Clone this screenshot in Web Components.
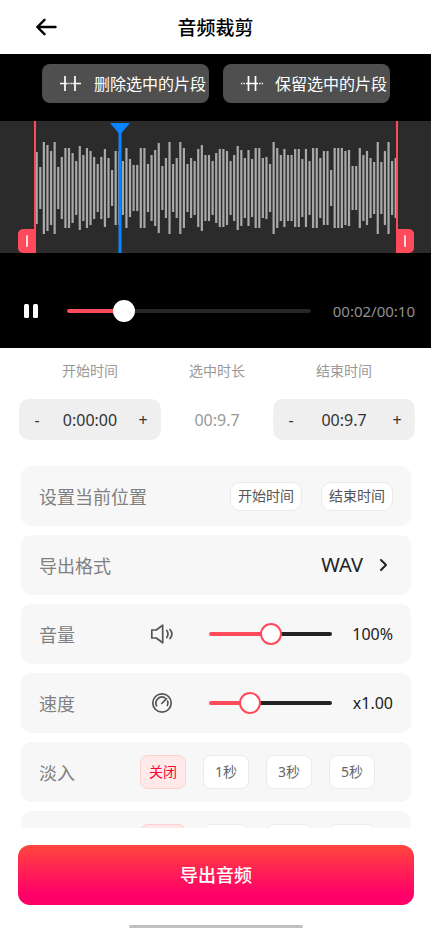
<!DOCTYPE html>
<html lang="zh-CN">
<head>
<meta charset="utf-8">
<meta name="viewport" content="width=device-width, initial-scale=1">
<title>音频裁剪</title>
<style>
html, body { margin: 0; height: 100%; background: #fff; }
body { font-family: "Noto Sans", "Noto Sans CJK SC", sans-serif; color: #222; --accent: #ff4a5c; }
</style>
</head>
<body>
<audio-trimmer></audio-trimmer>
<script>
const define = (name, markup, setup) => {
  const template = document.createElement('template');
  template.innerHTML = `<style>
    *, ::before, ::after { box-sizing: border-box; }
    button { font: inherit; color: inherit; border: 0; padding: 0; background: none; cursor: pointer; }
    svg { display: block; }
  </style>` + markup;
  customElements.define(name, class extends HTMLElement {
    connectedCallback() {
      if (this.shadowRoot) return;
      this.attachShadow({ mode: 'open' }).append(template.content.cloneNode(true));
      if (setup) setup(this, this.shadowRoot);
    }
  });
};

define('app-header', `<style>
  :host { display: grid; grid-template-columns: 60px 1fr 60px; align-items: center; height: 54px; background: #fff; color: #000; }
  button { justify-self: end; }
  h1 { margin: 0; padding-top: 2px; font-size: 19px; line-height: 28px; font-weight: 500; text-align: center; }
  </style>
  <button aria-label="返回"><svg width="24" height="20" viewBox="0 0 24 20" fill="none" stroke="currentColor" stroke-width="2.4" stroke-linecap="round" stroke-linejoin="round"><path d="M19.500 10H1.500M8.500 2.800L1.300 10l7.200 7.200"/></svg></button>
  <h1><slot></slot></h1>`);

define('clip-button', `<style>
  :host { display: block; flex: 1; max-width: 200px; }
  button { display: flex; align-items: center; gap: 12px; width: 100%; height: 39px; padding-left: 18px; border-radius: 8px; background: #4f4f4f; color: #fff; font-size: 16px; line-height: 24px; white-space: nowrap; }
  </style>
  <button><slot name="icon"></slot><span><slot></slot></span></button>`);

define('wave-view', `<style>
  :host { display: block; position: relative; height: 132px; padding: 0 34px 0 35px; background: #2b2b2b; }
  .bars { width: 100%; height: 132px; fill: #a9a9a9; }
  .edge, .head { position: absolute; top: 0; bottom: 0; }
  .edge { width: 18px; display: flex; align-items: end; }
  .start { left: 18px; border-right: 2px solid var(--accent); }
  .end { right: 17px; border-left: 2px solid var(--accent); }
  .edge i { flex: 1; height: 24px; background: var(--accent); display: grid; place-items: center; }
  .start i { border-radius: 5px 0 0 5px; padding-left: 2px; }
  .end i { border-radius: 0 5px 5px 0; padding-right: 2px; }
  .edge i::after { content: ""; width: 2px; height: 12px; border-radius: 1px; background: #ffd9dc; }
  .head { left: 110px; }
  </style>
  <svg class="bars" viewBox="0 0 362 132" preserveAspectRatio="none" aria-hidden="true"></svg>
  <button class="edge start" aria-label="选区开始"><i></i></button>
  <button class="edge end" aria-label="选区结束"><i></i></button>
  <svg class="head" width="20" height="132" viewBox="0 0 20 132" fill="#0a84ff"><path d="M0 2h20L11.500 12V132h-3V12z"/></svg>`,
  (host, root) => {
    const halves = [36,21,46,43,37,46,21,31,40,40,35,27,42,33,40,37,31,24,31,39,30,18,37,37,27,40,29,23,23,40,40,24,33,38,45,22,30,46,24,30,46,40,24,30,27,39,43,33,33,27,35,
      39,39,37,27,33,42,38,30,38,29,40,40,30,31,24,46,40,33,39,33,33,39,39,29,39,27,40,40,30,37,37,18,40,40,40,37,38,22,22,40,33,37,30,26,46,26,37,46,27,30];
    root.querySelector('.bars').innerHTML = halves.map((h, i) =>
      `<rect x="${(0.600 + i * 3.590).toFixed(2)}" y="${67 - h}" width="2.2" height="${h * 2}"/>`).join('');
  });

define('range-slider', `<style>
  :host { display: block; flex: 1; min-width: 0; --track: #222; --ring: var(--accent); }
  input { -webkit-appearance: none; appearance: none; display: block; width: 100%; height: 22px; margin: 0; background: none; }
  input::-webkit-slider-runnable-track { height: 4px; border-radius: 2px; background: linear-gradient(90deg, var(--accent) var(--fill), var(--track) var(--fill)); }
  input::-webkit-slider-thumb { -webkit-appearance: none; width: 22px; height: 22px; margin-top: -9px; border-radius: 50%; background: #fff; border: 2px solid var(--ring); }
  </style>
  <input type="range" step="any">`,
  (host, root) => {
    const input = root.querySelector('input');
    input.min = host.getAttribute('min');
    input.max = host.getAttribute('max');
    input.value = host.getAttribute('value');
    input.setAttribute('aria-label', host.getAttribute('label'));
    const paint = () => input.style.setProperty('--fill', (input.value - input.min) / (input.max - input.min) * 100 + '%');
    input.addEventListener('input', paint);
    paint();
  });

define('player-bar', `<style>
  :host { display: flex; align-items: center; padding: 47px 16px 26px 24px; color: #909090; }
  button { margin-right: 29px; }
  range-slider { --track: #262626; --ring: #fff; }
  time { width: 84px; margin-left: 20px; font-size: 15px; line-height: 22px; text-align: right; white-space: nowrap; }
  </style>
  <button aria-label="暂停"><svg width="14" height="14" viewBox="0 0 14 14" fill="#fff"><rect width="5" height="14" rx="1.500"/><rect x="9" width="5" height="14" rx="1.500"/></svg></button>
  <range-slider label="播放进度" min="0" max="10" value="2.08"></range-slider>
  <time><slot></slot></time>`);

define('time-stepper', `<style>
  :host { display: grid; grid-template-columns: 36px 1fr 36px; align-items: center; height: 41px; border-radius: 10px; background: #efefef; color: #333; font-size: 16px; line-height: 24px; text-align: center; }
  button { height: 41px; }
  </style>
  <button aria-label="减少">-</button><span><slot></slot></span><button aria-label="增加">+</button>`);

define('time-fields', `<style>
  :host { display: grid; grid-template-columns: 142fr 112fr 142fr; row-gap: 17px; align-items: center; padding: 12px 16px 26px 19px; color: #999; text-align: center; font-size: 16px; line-height: 24px; }
  .label { font-size: 14px; line-height: 22px; }
  </style>
  <span class="label">开始时间</span><span class="label">选中时长</span><span class="label">结束时间</span>
  <time-stepper role="group" aria-label="开始时间">0:00:00</time-stepper>
  <span>00:9.7</span>
  <time-stepper role="group" aria-label="结束时间">00:9.7</time-stepper>`);

define('setting-row', `<style>
  :host { display: flex; align-items: center; flex: none; height: 60px; padding: 0 18px; border-radius: 10px; background: #f7f7f7; font-size: 16px; line-height: 24px; }
  .label { flex: none; min-width: 101px; padding-top: 2px; font-size: 18px; line-height: 26px; color: #808080; }
  .content { flex: 1; display: flex; align-items: center; justify-content: flex-end; }
  </style>
  <span class="label"></span><div class="content"><slot></slot></div>`,
  (host, root) => { root.querySelector('.label').textContent = host.getAttribute('label'); });

define('pill-button', `<style>
  :host { display: block; margin-left: 19px; }
  button { width: 72px; height: 29px; border: 1px solid #ebebeb; border-radius: 10px; background: #fff; color: #555; font-size: 14px; line-height: 20px; }
  </style><button><slot></slot></button>`);

define('format-picker', `<style>
  :host { display: block; }
  button { display: flex; align-items: center; gap: 17px; padding-right: 6px; font-size: 20px; line-height: 28px; color: #222; }
  </style>
  <button aria-label="导出格式 WAV"><span><slot></slot></span><svg width="7" height="12" viewBox="0 0 7 12" fill="none" stroke="currentColor" stroke-width="2" stroke-linecap="round" stroke-linejoin="round"><path d="M1 1l5 5-5 5"/></svg></button>`);

define('slider-setting', `<style>
  :host { display: flex; align-items: center; flex: 1; padding-left: 10px; }
  range-slider { margin-left: 35px; }
  output { width: 42px; margin-left: 19px; text-align: right; white-space: nowrap; }
  </style>
  <slot name="icon"></slot><range-slider></range-slider><output><slot></slot></output>`,
  (host, root) => {
    const fresh = document.createElement('range-slider');
    for (const name of ['label', 'min', 'max', 'value']) fresh.setAttribute(name, host.getAttribute(name));
    root.querySelector('range-slider').replaceWith(fresh);
  });

define('fade-options', `<style>
  :host { display: flex; flex: 1; gap: 17px; font-size: 14px; line-height: 20px; }
  label { position: relative; display: grid; place-items: center; width: 46px; height: 34px; border: 1px solid #ebebeb; border-radius: 8px; background: #fff; color: #666; }
  label:has(:checked) { border-color: #ffd0d0; background: #ffe9e9; color: #ff0033; }
  input { position: absolute; inset: 0; margin: 0; opacity: 0; }
  </style>
  <label><input type="radio" name="fade" checked>关闭</label>
  <label><input type="radio" name="fade">1秒</label>
  <label><input type="radio" name="fade">3秒</label>
  <label><input type="radio" name="fade">5秒</label>`);

define('export-bar', `<style>
  :host { display: flex; flex-direction: column; align-items: center; gap: 20px; padding: 17px 17px 1px 18px; background: #fff; }
  button { width: 100%; height: 60px; border-radius: 12px; background: linear-gradient(#ff463d, #ff0068 82%); color: #fff; font-size: 18px; line-height: 26px; font-weight: 500; }
  .home { width: 44%; height: 3px; border-radius: 2px; background: #c0c0c0; }
  </style>
  <button><slot></slot></button><div class="home"></div>`);

define('audio-trimmer', `<style>
  :host { display: flex; flex-direction: column; height: 100vh; background: #fff; }
  .stage { background: #000; }
  .actions { display: flex; justify-content: center; gap: 14px; padding: 10px 41px 18px 42px; }
  .settings { flex: 1; min-height: 0; overflow: auto; scrollbar-width: none; display: flex; flex-direction: column; gap: 9px; padding: 0 20px 0 21px; }
  </style>
  <app-header>音频裁剪</app-header>
  <div class="stage">
    <div class="actions">
      <clip-button><svg slot="icon" width="22" height="16" viewBox="0 0 22 16" fill="none" stroke="#fff" stroke-width="1.700"><path d="M5 0v15M15 0v15M-.5 7.500h8M12.500 7.500h8.500"/><path d="M8.300 7.500h1.300M10.600 7.500h1.300"/></svg>删除选中的片段</clip-button>
      <clip-button><svg slot="icon" width="22" height="16" viewBox="0 0 22 16" fill="none" stroke="#fff" stroke-width="1.700"><path d="M7.500 0v15M14.500 0v15M5 7.500h12"/><path d="M0 7.500h1.400M2.500 7.500h1.400M18.100 7.500h1.400M20.600 7.500H22"/></svg>保留选中的片段</clip-button>
    </div>
    <wave-view></wave-view>
    <player-bar>00:02/00:10</player-bar>
  </div>
  <time-fields></time-fields>
  <div class="settings">
    <setting-row label="设置当前位置"><pill-button>开始时间</pill-button><pill-button>结束时间</pill-button></setting-row>
    <setting-row label="导出格式"><format-picker>WAV</format-picker></setting-row>
    <setting-row label="音量"><slider-setting label="音量" min="0" max="200" value="100"><svg slot="icon" width="24" height="22" viewBox="0 0 24 22" fill="none" stroke="#555" stroke-width="1.700" stroke-linejoin="round" stroke-linecap="round"><path d="M1.800 7h4.400L12.700 2.200v17.600L6.200 15H1.800z"/><path d="M16.800 7.500q2.400 3.500 0 7M20 6.500q3.800 4.500 0 9"/></svg>100%</slider-setting></setting-row>
    <setting-row label="速度"><slider-setting label="速度" min="0" max="100" value="30"><svg slot="icon" width="24" height="22" viewBox="0 0 24 22" fill="none" stroke="#555" stroke-width="1.700" stroke-linecap="round"><circle cx="12" cy="11" r="9.200"/><path d="M6.600 13.800a6 6 0 0 1 8.200-8M17.600 9a6 6 0 0 1-.2 4.500M11.800 11.500l4.700-4.900"/></svg>x1.00</slider-setting></setting-row>
    <setting-row label="淡入"><fade-options></fade-options></setting-row>
    <setting-row label="淡出"><fade-options></fade-options></setting-row>
  </div>
  <export-bar>导出音频</export-bar>`);
</script>
</body>
</html>
